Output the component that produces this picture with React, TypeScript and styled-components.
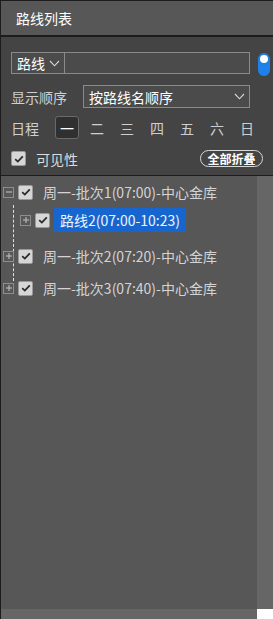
import React from "react";
import styled, { createGlobalStyle } from "styled-components";

const GlobalStyle = createGlobalStyle`
  html, body { margin: 0; padding: 0; background: #ffffff; }
  * { box-sizing: border-box; }
`;

const FONT = `"Noto Sans CJK SC", "Noto Sans", "Liberation Sans", sans-serif`;

const days = ["一", "二", "三", "四", "五", "六", "日"];

function Check({ size = 15 }: { size?: number }) {
  return (
    <CheckBox $size={size}>
      <svg width="10" height="8" viewBox="0 0 10 8">
        <polyline points="1.2,4.2 3.8,6.6 8.8,1.4" fill="none" stroke="#2b2b2b" strokeWidth="1.8" />
      </svg>
    </CheckBox>
  );
}

function Expander({ open }: { open?: boolean }) {
  return (
    <ExpBox>
      <svg width="8" height="8" viewBox="0 0 8 8">
        <line x1="1" y1="4" x2="7" y2="4" stroke="#b5b5b5" strokeWidth="1.2" />
        {!open && <line x1="4" y1="1" x2="4" y2="7" stroke="#b5b5b5" strokeWidth="1.2" />}
      </svg>
    </ExpBox>
  );
}

function Chevron() {
  return (
    <svg width="11" height="7" viewBox="0 0 11 7">
      <polyline points="1,1 5.5,5.8 10,1" fill="none" stroke="#d8d8d8" strokeWidth="1.1" />
    </svg>
  );
}

export default function App() {
  return (
    <Frame>
      <GlobalStyle />
      <Header>路线列表</Header>
      <Controls>
        <Row $h={22}>
          <SearchBox>
            <TypePick>
              路线 <Chevron />
            </TypePick>
            <SearchInput />
          </SearchBox>
          <Toggle />
        </Row>
        <Row $h={23} $mt={11}>
          <Label>显示顺序</Label>
          <OrderSelect>
            <span>按路线名顺序</span>
            <Chevron />
          </OrderSelect>
        </Row>
        <Row $h={23} $mt={8}>
          <Label>日程</Label>
          <Days>
            {days.map((d, i) => (
              <Day key={d} $active={i === 0}>{d}</Day>
            ))}
          </Days>
        </Row>
        <Row $h={17} $mt={11}>
          <Check />
          <VisLabel>可见性</VisLabel>
          <CollapseBtn>全部折叠</CollapseBtn>
        </Row>
      </Controls>
      <TreeArea>
        <TreeMain>
          <TreeList>
            <Node $h={32}>
              <Expander open />
              <Check />
              <NodeText>周一-批次1(07:00)-中心金库</NodeText>
            </Node>
            <Node $h={24} $indent={17} $mb={8}>
              <Expander />
              <Check />
              <NodeText $selected>路线2(07:00-10:23)</NodeText>
            </Node>
            <Node $h={32}>
              <Expander />
              <Check />
              <NodeText>周一-批次2(07:20)-中心金库</NodeText>
            </Node>
            <Node $h={32}>
              <Expander />
              <Check />
              <NodeText>周一-批次3(07:40)-中心金库</NodeText>
            </Node>
          </TreeList>
        </TreeMain>
        <VScroll />
        <HScroll />
        <Corner />
      </TreeArea>
    </Frame>
  );
}

const Frame = styled.div`
  width: 273px;
  height: 619px;
  display: flex;
  flex-direction: column;
  border-top: 1px solid #1c1c1c;
  border-left: 1px solid #1c1c1c;
  font-family: ${FONT};
  overflow: hidden;
`;

const Header = styled.div`
  height: 36px;
  flex-shrink: 0;
  background: #575757;
  border-bottom: 2px solid #1c1c1c;
  color: #ffffff;
  font-size: 14px;
  display: flex;
  align-items: center;
  padding-left: 15px;
  padding-bottom: 1px;
`;

const Controls = styled.div`
  flex-shrink: 0;
  height: 139px;
  background: #444444;
  border-bottom: 1px solid #1c1c1c;
  padding: 15px 0 0 10px;
`;

const Row = styled.div<{ $h: number; $mt?: number }>`
  display: flex;
  align-items: center;
  height: ${(p) => p.$h}px;
  margin-top: ${(p) => p.$mt ?? 0}px;
  padding-right: 10px;
`;

const SearchBox = styled.div`
  width: 239px;
  height: 22px;
  flex-shrink: 0;
  display: flex;
  border: 1px solid #8a8a8a;
  background: #4b4b4b;
`;

const TypePick = styled.div`
  width: 53px;
  border-right: 1px solid #8a8a8a;
  color: #ffffff;
  font-size: 14px;
  display: flex;
  align-items: center;
  gap: 4px;
  padding-left: 5px;
`;

const SearchInput = styled.div`
  flex: 1;
`;

const Toggle = styled.div`
  width: 12px;
  height: 23px;
  flex-shrink: 0;
  margin-left: 8px;
  margin-top: 3px;
  border-radius: 6px;
  background: #1e80e8;
  position: relative;
  &::after {
    content: "";
    position: absolute;
    left: 2px;
    top: 2px;
    width: 8px;
    height: 8px;
    border-radius: 50%;
    background: #ffffff;
  }
`;

const Label = styled.div`
  color: #d0d0d0;
  font-size: 14px;
  width: 72px;
  flex-shrink: 0;
  white-space: nowrap;
`;

const OrderSelect = styled.div`
  width: 167px;
  height: 23px;
  flex-shrink: 0;
  border: 1px solid #8a8a8a;
  background: #4b4b4b;
  display: flex;
  align-items: center;
  justify-content: space-between;
  padding: 0 4px 0 5px;
  color: #ffffff;
  font-size: 14px;
`;

const Days = styled.div`
  display: flex;
  gap: 6px;
  margin-left: -28px;
`;

const Day = styled.div<{ $active?: boolean }>`
  width: 24px;
  height: 23px;
  display: flex;
  align-items: center;
  justify-content: center;
  font-size: 14px;
  color: ${(p) => (p.$active ? "#ffffff" : "#cfcfcf")};
  background: ${(p) => (p.$active ? "#303030" : "transparent")};
  border: 1px solid ${(p) => (p.$active ? "#6a6a6a" : "transparent")};
  border-radius: 3px;
`;

const CheckBox = styled.div<{ $size: number }>`
  width: ${(p) => p.$size}px;
  height: ${(p) => p.$size}px;
  flex-shrink: 0;
  background: #d6d6d6;
  border: 1px solid #9a9a9a;
  border-radius: 2px;
  display: flex;
  align-items: center;
  justify-content: center;
`;

const VisLabel = styled.div`
  margin-left: 10px;
  color: #dcdcdc;
  font-size: 14px;
`;

const CollapseBtn = styled.div`
  margin-left: auto;
  width: 63px;
  height: 17px;
  border: 1px solid #d8d8d8;
  border-radius: 9px;
  color: #ffffff;
  font-size: 12px;
  font-weight: bold;
  display: flex;
  align-items: center;
  justify-content: center;
`;

const TreeArea = styled.div`
  flex: 1;
  display: grid;
  grid-template-columns: 1fr 16px;
  grid-template-rows: 1fr 10px;
`;

const TreeMain = styled.div`
  background: #575757;
  position: relative;
`;

const TreeList = styled.div`
  position: relative;
  &::before {
    content: "";
    position: absolute;
    left: 12px;
    top: 29px;
    height: 76px;
    border-left: 1px dashed #e0e0e0;
  }
`;

const Node = styled.div<{ $h: number; $indent?: number; $mb?: number }>`
  position: relative;
  height: ${(p) => p.$h}px;
  margin-bottom: ${(p) => p.$mb ?? 0}px;
  display: flex;
  align-items: center;
  padding-left: ${(p) => 2 + (p.$indent ?? 0)}px;
`;

const ExpBox = styled.div`
  width: 11px;
  height: 11px;
  flex-shrink: 0;
  border: 1px solid #8e8e8e;
  background: #575757;
  display: flex;
  align-items: center;
  justify-content: center;
  margin-right: 4px;
`;

const NodeText = styled.div<{ $selected?: boolean }>`
  margin-left: ${(p) => (p.$selected ? 4 : 10)}px;
  padding: 0 ${(p) => (p.$selected ? 6 : 0)}px;
  height: 24px;
  display: flex;
  align-items: center;
  font-size: 14px;
  white-space: nowrap;
  color: ${(p) => (p.$selected ? "#eef4ff" : "#d4d4d4")};
  background: ${(p) => (p.$selected ? "#1766cf" : "transparent")};
  border-radius: 1px;
`;

const VScroll = styled.div`
  background: #666666;
`;

const HScroll = styled.div`
  background: #666666;
`;

const Corner = styled.div`
  background: #ffffff;
`;
